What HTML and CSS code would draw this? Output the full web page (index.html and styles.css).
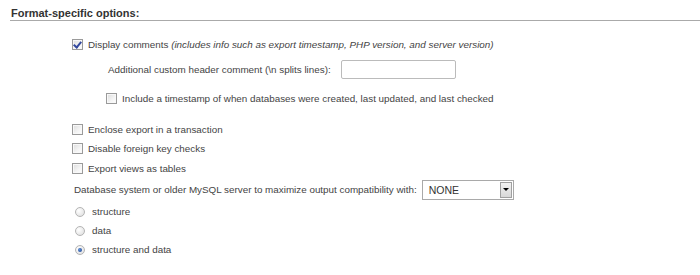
FILE: index.html
```html
<!DOCTYPE html>
<html>
<head>
<meta charset="utf-8">
<link rel="stylesheet" href="styles.css">
</head>
<body>
<div class="section">
  <div class="section-title">Format-specific options:</div>
  <div class="options">
    <label class="row r-display"><span class="cb checked"></span><span>Display comments <i>(includes info such as export timestamp, PHP version, and server version)</i></span></label>
    <div class="row r-header sub"><span class="lbl lbl-wide">Additional custom header comment (\n splits lines):</span><span class="textbox"></span></div>
    <label class="row r-ts sub2"><span class="cb"></span><span>Include a timestamp of when databases were created, last updated, and last checked</span></label>
    <label class="row r-enclose r-mid"><span class="cb"></span><span>Enclose export in a transaction</span></label>
    <label class="row r-mid"><span class="cb"></span><span>Disable foreign key checks</span></label>
    <label class="row r-mid"><span class="cb"></span><span>Export views as tables</span></label>
    <div class="row r-compat"><span class="lbl">Database system or older MySQL server to maximize output compatibility with:</span><span class="select"><span class="select-val">NONE</span><span class="select-btn"><span class="tri"></span></span></span></div>
    <label class="row r-radio1"><span class="rb"></span><span>structure</span></label>
    <label class="row"><span class="rb"></span><span>data</span></label>
    <label class="row"><span class="rb checked"></span><span>structure and data</span></label>
  </div>
</div>
</body>
</html>
```
FILE: styles.css
```css
html, body {
  margin: 0;
  padding: 0;
  background: #fff;
}
body {
  font-family: "Liberation Sans", Arial, sans-serif;
  font-size: 9.85px;
  color: #444;
}
.section {
  padding-top: 7px;
}
.section-title {
  margin-left: 10px;
  padding-left: 1px;
  font-size: 11px;
  font-weight: bold;
  color: #333;
  line-height: 13px;
  border-bottom: 1px solid #aaa;
}
.options {
  padding-left: 72px;
  padding-top: 14px;
}
.row {
  display: flex;
  align-items: center;
  height: 19px;
  white-space: nowrap;
}
.r-display { height: 18px; }
.r-header { margin-top: 7px; padding-left: 36px; }
.r-ts { margin-top: 10px; padding-left: 34px; height: 18px; }
.r-enclose { margin-top: 12.5px; }
.r-mid { height: 19.5px; }
.r-compat { margin-top: 2px; padding-left: 2px; }
.r-radio1 { margin-top: 3px; }
i { font-style: italic; }

.cb {
  box-sizing: border-box;
  width: 11px;
  height: 11px;
  margin-right: 5px;
  border: 1px solid #9a9a9a;
  background: linear-gradient(135deg, #dcdcdc 0%, #f4f4f4 60%, #fff 100%);
  box-shadow: inset 0 0 0 1px #f8f8f8;
  position: relative;
  flex: none;
}
.cb.checked::after {
  content: "";
  position: absolute;
  left: 2px;
  top: 0px;
  width: 3px;
  height: 6px;
  border-right: 2px solid #33489e;
  border-bottom: 2px solid #33489e;
  transform: rotate(40deg);
}
.rb {
  box-sizing: border-box;
  width: 10px;
  height: 10px;
  margin: 0 7px 0 3px;
  border-radius: 50%;
  border: 1px solid #b4b4b4;
  background: radial-gradient(circle at 35% 35%, #fff 0%, #e6e6e6 70%, #d4d4d4 100%);
  position: relative;
  flex: none;
}
.rb.checked::after {
  content: "";
  position: absolute;
  left: 2px;
  top: 2px;
  width: 4px;
  height: 4px;
  border-radius: 50%;
  background: radial-gradient(circle at 40% 40%, #5a8fd8 0%, #1d3f8a 100%);
}
.lbl {
  margin-right: 5px;
}
.lbl-wide {
  margin-right: 10px;
}
.textbox {
  box-sizing: border-box;
  width: 115px;
  height: 19px;
  border: 1px solid #bbb;
  border-radius: 2px;
  background: #fff;
}
.select {
  box-sizing: border-box;
  display: flex;
  width: 92px;
  height: 20px;
  border: 1px solid #a9a9a9;
  background: #fff;
}
.select-val {
  flex: 1;
  padding-left: 6px;
  line-height: 18px;
  color: #333;
  font-size: 10.5px;
}
.select-btn {
  box-sizing: border-box;
  width: 12px;
  margin: 1px;
  border: 1px solid #a0a0a0;
  background: linear-gradient(#f2f2f2, #d8d8d8);
  display: flex;
  align-items: center;
  justify-content: center;
}
.tri {
  width: 0;
  height: 0;
  border-left: 3px solid transparent;
  border-right: 3px solid transparent;
  border-top: 3px solid #000;
}
```
